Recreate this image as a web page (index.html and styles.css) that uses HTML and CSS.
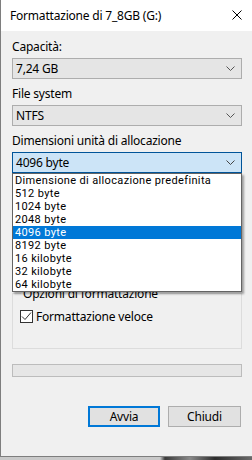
FILE: index.html
```html
<!DOCTYPE html>
<html lang="it">
<head>
<meta charset="utf-8">
<title>Formattazione di 7_8GB (G:)</title>
<link rel="stylesheet" href="styles.css">
</head>
<body>
<div class="window">
  <div class="titlebar">
    <span class="title">Formattazione di 7_8GB (G:)</span>
    <svg class="close" width="10" height="10" viewBox="0 0 10 10"><path d="M0.5 0.5 L9.5 9.5 M9.5 0.5 L0.5 9.5" stroke="#000" stroke-width="1" fill="none"/></svg>
  </div>
  <div class="content">
    <div class="label first">Capacità:</div>
    <div class="combo"><span>7,24 GB</span><svg class="chev" width="9" height="5" viewBox="0 0 9 5"><path d="M0.5 0.5 L4.5 4.5 L8.5 0.5" stroke="#555" fill="none"/></svg></div>
    <div class="label">File system</div>
    <div class="combo"><span>NTFS</span><svg class="chev" width="9" height="5" viewBox="0 0 9 5"><path d="M0.5 0.5 L4.5 4.5 L8.5 0.5" stroke="#555" fill="none"/></svg></div>
    <div class="label">Dimensioni unità di allocazione</div>
    <div class="combo-wrap">
      <div class="combo focused"><span>4096 byte</span><svg class="chev" width="9" height="5" viewBox="0 0 9 5"><path d="M0.5 0.5 L4.5 4.5 L8.5 0.5" stroke="#444" fill="none"/></svg></div>
      <ul class="dropdown">
        <li>Dimensione di allocazione predefinita</li>
        <li>512 byte</li>
        <li>1024 byte</li>
        <li>2048 byte</li>
        <li class="selected">4096 byte</li>
        <li>8192 byte</li>
        <li>16 kilobyte</li>
        <li>32 kilobyte</li>
        <li>64 kilobyte</li>
      </ul>
    </div>
    <fieldset class="group">
      <legend>Opzioni di formattazione</legend>
      <div class="check-row">
        <span class="checkbox"><svg width="11" height="11" viewBox="0 0 11 11"><path d="M1 5.5 L4 8.5 L10 1.5" stroke="#333" stroke-width="1" fill="none"/></svg></span>
        <span>Formattazione veloce</span>
      </div>
    </fieldset>
    <div class="progress"></div>
    <div class="buttons">
      <div class="btn default">Avvia</div>
      <div class="btn">Chiudi</div>
    </div>
  </div>
</div>
<div class="desktop"></div>
</body>
</html>
```
FILE: styles.css
```css
html, body {
  margin: 0;
  padding: 0;
}
body {
  width: 252px;
  height: 460px;
  overflow: hidden;
  background: #f0f0f0;
  font-family: "Noto Sans", "Open Sans", sans-serif;
  font-size: 12px;
  color: #000;
}
.window {
  height: 456px;
  border-left: 1px solid #7e7e7e;
  border-bottom: 1px solid #7e7e7e;
  background: #f0f0f0;
  display: flex;
  flex-direction: column;
}
.titlebar {
  height: 31px;
  background: #fff;
  display: flex;
  align-items: center;
  padding: 0 9px 0 9px;
  flex-shrink: 0;
}
.title {
  flex: 1;
  font-size: 12px;
  letter-spacing: -0.2px;
  margin-top: -1px;
}
.close {
  margin-right: 1px;
  margin-top: -1px;
}
.content {
  padding: 8px 10px 0 11px;
  display: flex;
  flex-direction: column;
}
.label {
  height: 16px;
  line-height: 16px;
  margin-top: 7px;
  margin-bottom: 3px;
  letter-spacing: -0.2px;
}
.label.first {
  margin-top: 0;
}
.combo {
  height: 21px;
  box-sizing: border-box;
  border: 1px solid #adadad;
  background: #e5e5e5;
  display: flex;
  align-items: center;
  justify-content: space-between;
  padding: 0 6px 0 3px;
  letter-spacing: -0.2px;
}
.combo.focused {
  background: #cce4f7;
  border-color: #005499;
}
.combo-wrap {
  position: relative;
}
.dropdown {
  position: absolute;
  top: 21px;
  left: 0;
  width: 230px;
  box-sizing: border-box;
  margin: 0;
  padding: 0;
  list-style: none;
  background: #fff;
  border: 1px solid #646464;
  box-shadow: 2px 2px 2px rgba(0, 0, 0, 0.35);
  z-index: 2;
}
.dropdown li {
  height: 13px;
  line-height: 13px;
  padding-left: 2px;
  font-family: Roboto, "Noto Sans", sans-serif;
  font-size: 11px;
  letter-spacing: 0.35px;
  white-space: nowrap;
}
.dropdown li.selected {
  background: #0078d7;
  color: #fff;
}
.group {
  margin: 112px 0 0 0;
  padding: 6px 7px 0 7px;
  height: 64px;
  box-sizing: border-box;
  border: 1px solid #dcdcdc;
  min-width: 0;
}
.group legend {
  padding: 0 2px;
  margin-left: 1px;
  letter-spacing: -0.2px;
}
.check-row {
  display: flex;
  align-items: center;
  gap: 3px;
  letter-spacing: -0.2px;
}
.checkbox {
  width: 13px;
  height: 13px;
  box-sizing: border-box;
  border: 1px solid #333;
  background: #fff;
  display: flex;
  align-items: center;
  justify-content: center;
}
.progress {
  margin-top: 15px;
  height: 13px;
  box-sizing: border-box;
  border: 1px solid #bcbcbc;
  background: #e6e6e6;
}
.buttons {
  margin-top: 29px;
  display: flex;
  justify-content: flex-end;
  gap: 8px;
  padding-right: 1px;
}
.btn {
  width: 73px;
  height: 21px;
  box-sizing: border-box;
  border: 1px solid #adadad;
  background: #e1e1e1;
  display: flex;
  align-items: center;
  justify-content: center;
  letter-spacing: -0.2px;
}
.btn.default {
  width: 72px;
  border: 2px solid #0078d7;
}
.desktop {
  height: 3px;
  background: linear-gradient(to right, #c9c9c9 0, #c9c9c9 160px, #3a3a3a 165px, #8a8a8a 190px, #2c2c2c 215px, #6a6a6a 252px);
}
```
